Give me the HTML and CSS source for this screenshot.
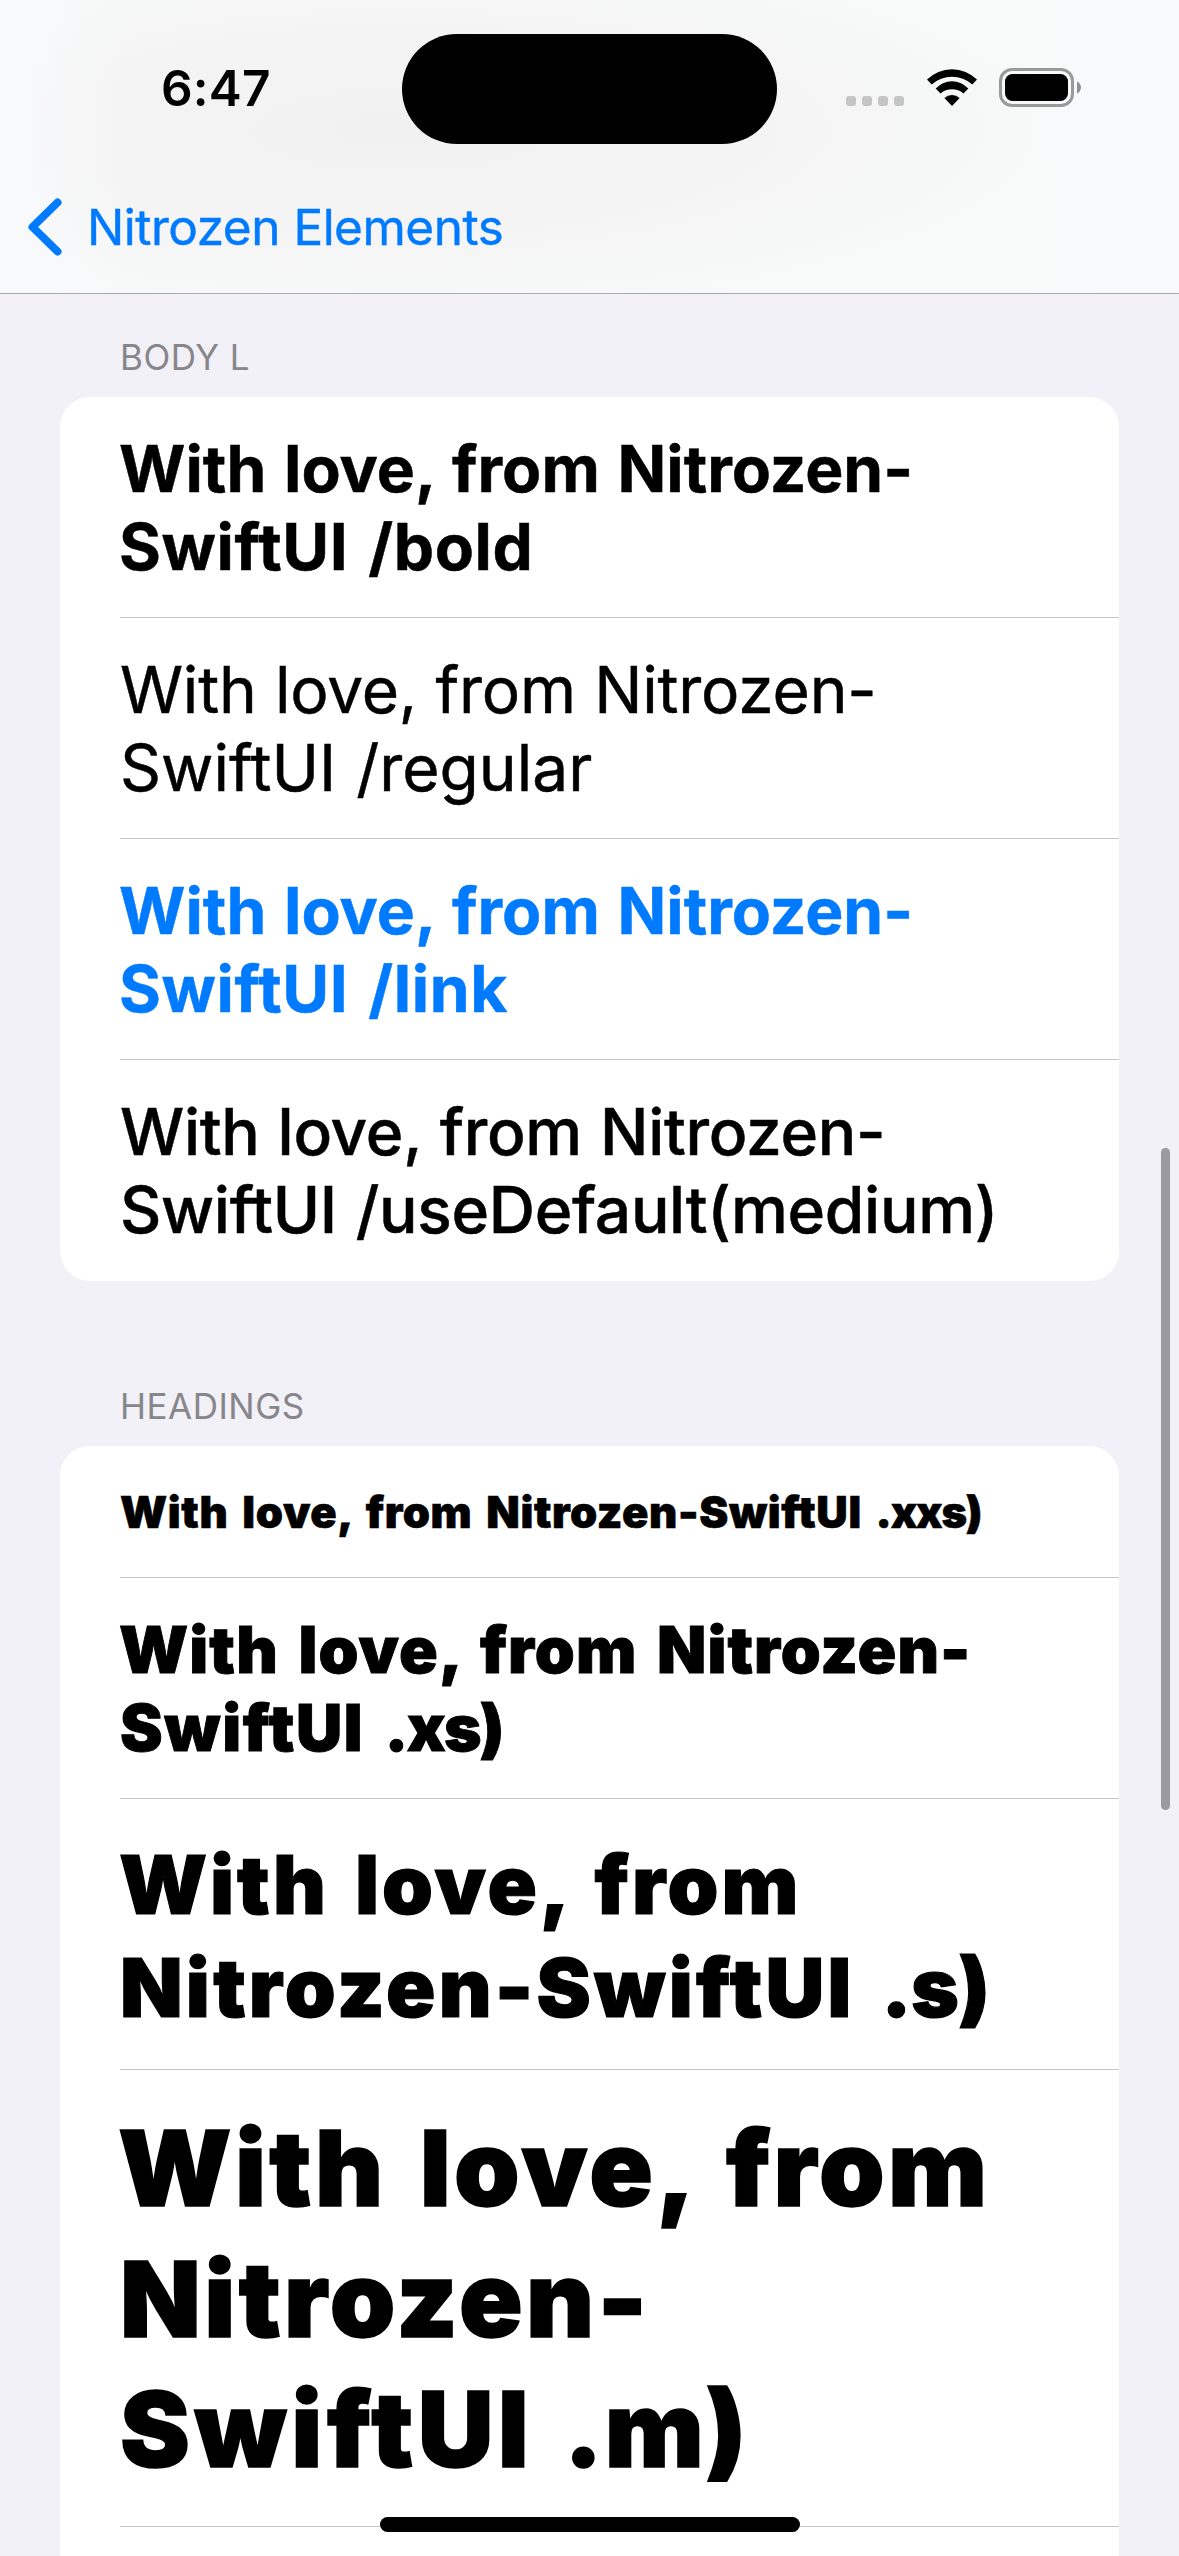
FILE: index.html
```html
<!DOCTYPE html>
<html lang="en">
<head>
<meta charset="utf-8">
<title>Nitrozen Elements</title>
<link rel="stylesheet" href="styles.css">
</head>
<body>
<div class="screen">
  <header class="topbar">
    <div class="status">
      <div class="time">6:47</div>
      <div class="island"></div>
      <div class="indicators">
        <div class="dots"><i></i><i></i><i></i><i></i></div>
        <svg class="wifi" viewBox="0 0 50 37">
          <path d="M0 10.6A35.2 35.2 0 0 1 50 10.6L45.3 15.4A30.5 30.5 0 0 0 4.7 15.4Z"/>
          <path d="M8.7 19.4A22.3 22.3 0 0 1 41.3 19.4L36.5 24.4A17.8 17.8 0 0 0 13.5 24.4Z"/>
          <path d="M17.4 29A11 11 0 0 1 32.6 29L25 37Z"/>
        </svg>
        <svg class="battery" viewBox="0 0 82 39">
          <rect x="1.5" y="1.5" width="72" height="36" rx="11.5" fill="none" stroke="#999" stroke-width="3"/>
          <rect x="6" y="6" width="63" height="27" rx="7.5"/>
          <path d="M78 13.5C80.5 14.5 82 17 82 19.5S80.5 24.500 78 25.500Z" fill="#8f8f8f"/>
        </svg>
      </div>
    </div>
    <nav class="nav">
      <svg class="chevron" viewBox="0 0 34 58"><path d="M29.500 4.500L4.500 29L29.500 53.500"/></svg>
      <span class="back">Nitrozen Elements</span>
    </nav>
  </header>

  <main>
    <h2 class="section first">BODY L</h2>
    <div class="card">
      <div class="row body bold"><span class="l1">With love, from Nitrozen-</span><span class="l2">SwiftUI /bold</span></div>
      <div class="row body regular"><span class="l1">With love, from Nitrozen-</span><span class="l2">SwiftUI /regular</span></div>
      <div class="row body bold link"><span class="l1">With love, from Nitrozen-</span><span class="l2">SwiftUI /link</span></div>
      <div class="row body medium"><span class="l1">With love, from Nitrozen-</span><span class="l2">SwiftUI /useDefault(medium)</span></div>
    </div>

    <h2 class="section">HEADINGS</h2>
    <div class="card open">
      <div class="row xxs"><span class="l1">With love, from Nitrozen-SwiftUI <b>.xxs)</b></span></div>
      <div class="row xs"><span class="l1">With love, from Nitrozen-</span><span class="l2">SwiftUI <b>.xs)</b></span></div>
      <div class="row s"><span class="l1">With love, from</span><span class="l2">Nitrozen-SwiftUI <b>.s)</b></span></div>
      <div class="row m"><span class="l1">With love, from</span><span class="l2">Nitrozen-</span><span class="l3">SwiftUI <b>.m)</b></span></div>
    </div>
  </main>

  <div class="scrollbar"></div>
  <div class="home"></div>
</div>
</body>
</html>
```
FILE: styles.css
```css
* { box-sizing: border-box; }

body {
  margin: 0;
  background: #f2f1f7;
  font-family: Inter, "Liberation Sans", sans-serif;
  color: #000;
}

.screen {
  position: relative;
  width: 1179px;
  height: 2556px;
  overflow: hidden;
  display: flex;
  flex-direction: column;
}

/* Status bar and navigation bar */
.topbar {
  flex: none;
  height: 294px;
  border-bottom: 1px solid #a9a9ac;
  background:
    linear-gradient(90deg, rgba(249, 250, 252, .9) 0, rgba(249, 250, 252, 0) 130px, rgba(249, 250, 252, 0) 1020px, rgba(249, 250, 252, .9) 1150px),
    radial-gradient(ellipse 680px 190px at 400px 130px, #f1f1f1, #f4f4f4 50%, #f8f9f9);
}

.status {
  height: 178px;
  display: grid;
  grid-template-columns: 402px 375px 402px;
  align-items: center;
}

.time {
  padding-left: 161px;
  font-size: 49.5px;
  font-weight: 600;
  line-height: 60px;
  letter-spacing: .2px;
  margin-top: -2px;
}

.island {
  height: 110px;
  border-radius: 55px;
  background: #000;
}

.indicators {
  display: flex;
  align-items: center;
  padding-left: 69px;
  margin-top: -3px;
}

.dots {
  display: flex;
  gap: 6px;
  margin-top: 27px;
}

.dots i {
  width: 10px;
  height: 10px;
  border-radius: 3px;
  background: #c5c5c5;
}

.wifi { width: 50px; height: 37px; margin-left: 23px; }
.battery { width: 82px; height: 39px; margin-left: 22px; }

.nav {
  height: 98px;
  display: flex;
  align-items: center;
  padding-left: 28px;
  color: #007aff;
}

.chevron {
  width: 34px;
  height: 58px;
  fill: none;
  stroke: #007aff;
  stroke-width: 8px;
  stroke-linecap: round;
  stroke-linejoin: round;
}

.back {
  margin-left: 25px;
  font-size: 49.5px;
  line-height: 60px;
  letter-spacing: -.5px;
  -webkit-text-stroke: .4px;
}

/* Grouped list */
.section {
  margin: 0;
  padding: 103px 0 18px 120px;
  font-size: 35px;
  font-weight: 400;
  line-height: 44px;
  letter-spacing: .5px;
  color: #87868b;
}

.section.first { padding-top: 41px; }

.card {
  margin: 0 60px;
  padding-left: 60px;
  background: #fff;
  border-radius: 30px;
  overflow: hidden;
}

.card.open {
  padding-bottom: 60px;
  border-radius: 30px 30px 0 0;
}

.row {
  padding-top: 33px;
  border-bottom: 1px solid #c6c6c8;
  white-space: nowrap;
}

.card:not(.open) .row:last-child { border-bottom-color: transparent; }

.row span { display: block; }
.row b { font-weight: inherit; }

.body { height: 221px; font-size: 64px; line-height: 78px; -webkit-text-stroke: .5px; }

.bold { font-weight: 700; }
.bold .l1 { letter-spacing: .05px; word-spacing: 2.4px; margin-left: -1px; }
.bold .l2 { letter-spacing: .65px; word-spacing: 4px; margin-left: -1px; }
.link { color: #007aff; }

.regular .l1 { letter-spacing: -.2px; word-spacing: .6px; }
.regular .l2 { word-spacing: 2px; }

.medium { font-weight: 500; }
.medium .l1 { letter-spacing: -.3px; word-spacing: 1.4px; }
.medium .l2 { letter-spacing: -.3px; word-spacing: 2px; }

.xxs, .xs, .s, .m { font-weight: 900; -webkit-text-stroke: .014em; }

.xxs { height: 132px; padding-top: 34px; font-size: 43.6px; line-height: 66px; letter-spacing: .6px; word-spacing: 4.6px; }
.xxs b { letter-spacing: -1.2px; }

.xs { height: 221px; font-size: 64px; line-height: 78px; }
.xs .l1 { margin-left: -1px; letter-spacing: 1.05px; word-spacing: 6px; }
.xs .l2 { letter-spacing: 1.7px; word-spacing: 6px; }
.xs b { letter-spacing: -1.8px; }

.s { height: 271px; padding-top: 34px; font-size: 81.5px; line-height: 103px; letter-spacing: 3.15px; }
.s .l1 { margin-left: -1px; letter-spacing: 2.9px; word-spacing: 7px; }
.s .l2 { word-spacing: 7.5px; }
.s b { letter-spacing: -.6px; }

.m { height: 457px; font-size: 105px; line-height: 130.67px; letter-spacing: 3.4px; }
.m .l1 { margin-left: -2px; letter-spacing: 3.3px; word-spacing: 9px; }
.m .l3 { letter-spacing: 4.6px; word-spacing: 5px; }
.m b { letter-spacing: 1.9px; }

/* Overlays */
.scrollbar {
  position: absolute;
  top: 1148px;
  right: 9px;
  width: 9px;
  height: 662px;
  border-radius: 5px;
  background: #9b9aa0;
}

.home {
  position: absolute;
  left: 380px;
  bottom: 24px;
  width: 420px;
  height: 15px;
  border-radius: 8px;
  background: #000;
}
```
